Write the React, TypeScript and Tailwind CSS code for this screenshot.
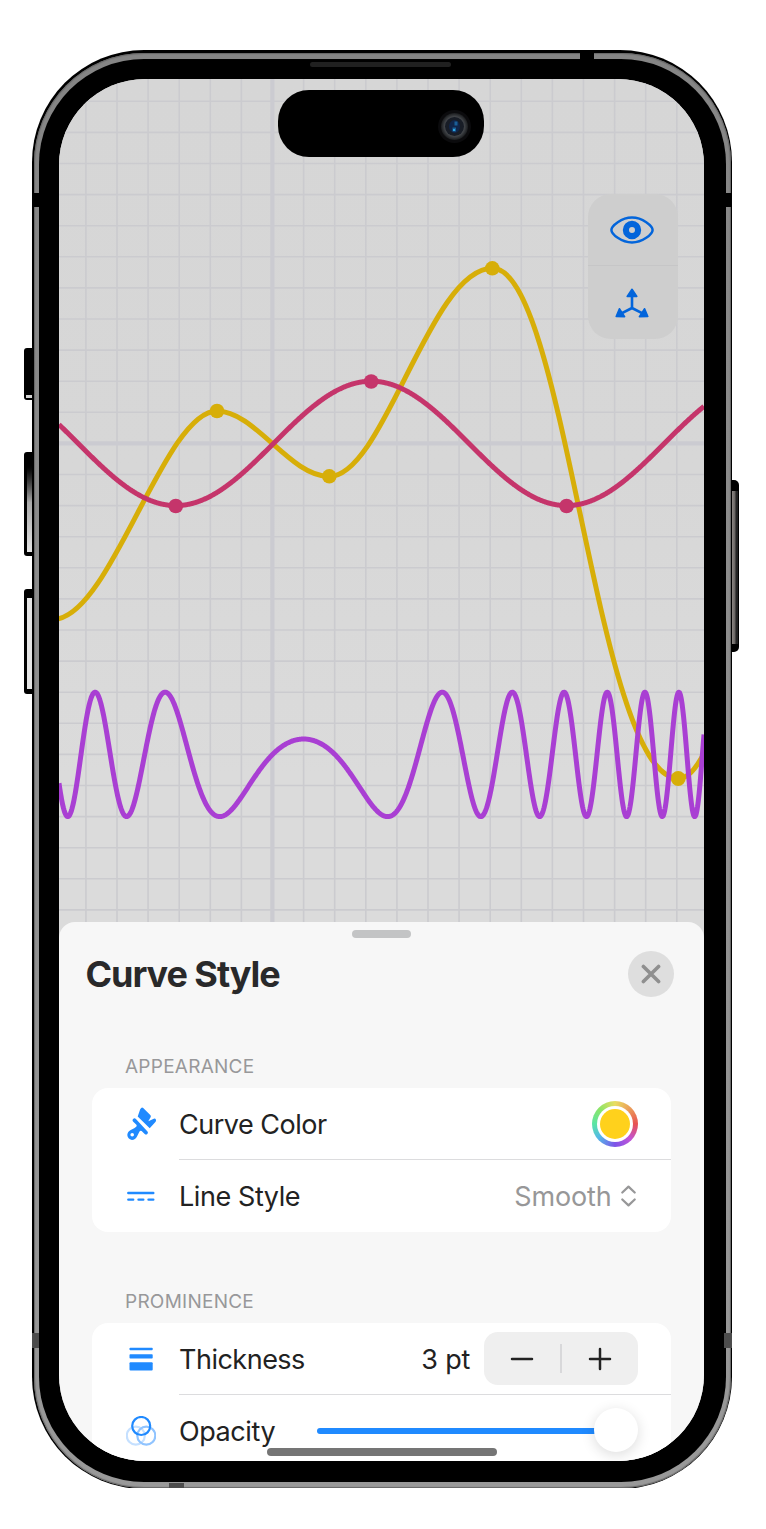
import React from "react";

const UNIT = 31.1;
const OX = 272.6;
const OY = 443.4;

function plot(f: (x: number) => number): string {
  let d = "";
  for (let px = 59; px <= 704; px += 0.5) {
    const y = OY - UNIT * f((px - OX) / UNIT);
    d += `${d ? "L" : "M"}${px} ${y.toFixed(2)}`;
  }
  return d;
}

const yellow =
  "M57 619C112 611 165 411 217 411C255 411 290 476.5 329 476.5C384 476.5 430 268.3 492.5 268.3C566 268.3 596 778.5 678.5 778.5C690 778.5 699 764 706 749";
const crimson = plot((x) => 2 * Math.sin((x - 0.03) / 2));
const purple = plot((x) => -10 + 2 * Math.sin((1 - (x - 1) * (x - 1)) / 4));

const cols = Array.from({ length: 20 }, (_, i) => i - 6);
const rows = Array.from({ length: 28 }, (_, i) => i - 11);

function Graph() {
  return (
    <svg className="absolute left-0 top-0" width="645" height="870" viewBox="59 79 645 870">
      <defs>
        <linearGradient id="paper" x1="0" y1="0" x2="0" y2="1">
          <stop offset="0" stopColor="#d6d6d6" />
          <stop offset="0.45" stopColor="#d7d7d7" />
          <stop offset="0.8" stopColor="#dbdbdb" />
          <stop offset="1" stopColor="#dbdbdb" />
        </linearGradient>
      </defs>
      <rect x="59" y="79" width="645" height="870" fill="url(#paper)" />
      <g stroke="#cbcbcf" strokeWidth="1.6">
        {cols.map((c) => (
          <path key={c} d={`M${OX + c * UNIT - 0.1} 79V949`} />
        ))}
        {rows.map((r) => (
          <path key={r} d={`M59 ${OY + r * UNIT}H704`} />
        ))}
      </g>
      <g stroke="#cbcbd1" strokeWidth="4.2">
        <path d={`M${OX - 0.2} 79V949`} />
        <path d={`M59 ${OY}H704`} />
      </g>
      <g fill="none" strokeWidth="5" strokeLinejoin="round">
        <path d={yellow} stroke="#d7ae08" />
        <path d={crimson} stroke="#c5356b" />
      </g>
      <g fill="#d7ae08">
        <circle cx="217" cy="411" r="7.3" />
        <circle cx="329.3" cy="476.3" r="7.3" />
        <circle cx="492.3" cy="268.3" r="7.3" />
        <circle cx="678.2" cy="778.5" r="7.5" />
      </g>
      <g fill="#c5356b">
        <circle cx="175.8" cy="506" r="7.3" />
        <circle cx="371.2" cy="381.5" r="7.3" />
        <circle cx="566.6" cy="506" r="7.3" />
      </g>
      <path d={purple} fill="none" stroke="#a93fd3" strokeWidth="5" strokeLinejoin="round" />
    </svg>
  );
}

function EyeIcon() {
  return (
    <svg width="44" height="28" viewBox="0 0 44 28" fill="none">
      <path
        d="M1.400 14C1.400 9.800 11.500 1.500 22 1.500S42.600 9.800 42.600 14 32.500 26.500 22 26.500 1.400 18.200 1.400 14Z"
        stroke="#0365db"
        strokeWidth="2.5"
      />
      <circle cx="22" cy="14" r="6.1" stroke="#0365db" strokeWidth="6.200" />
    </svg>
  );
}

function AxesIcon() {
  return (
    <svg width="34" height="30" viewBox="0 0 34 30" fill="#0365db" stroke="#0365db" strokeLinejoin="round">
      <path d="M17 5V20L5 26.200M17 20L29 26.200" fill="none" strokeWidth="2.600" />
      <path d="M17 1.300L21.800 8.400H12.200ZM1.200 28.500L4.400 20.800L9.600 28.600ZM32.800 28.500L29.600 20.800L24.400 28.600Z" strokeWidth="1.600" />
    </svg>
  );
}

function BrushIcon() {
  return (
    <svg className="ml-[2px]" width="30" height="34" viewBox="0 0 30 34" fill="#208aff">
      <path d="M14.600 0.700Q15.400 0.300 16.200 1.100L23.500 8.200Q24.200 9 23.600 10.200L21.300 14.200L26.800 11.700Q28.300 11.300 29 12.700Q29.300 13.900 28.400 14.900L22.700 21.200L10.700 9.500L13.200 2.300Q13.700 1.200 14.600 0.700Z" />
      <path d="M8.200 11.400Q6.800 11.200 5.900 12.200Q5 13.300 6 14.400L9.400 17.800Q10.200 18.700 9.200 19.700Q8 20.900 3.700 23Q0.500 24.700 0.300 28.100Q0.600 32.200 4.900 32.900Q8.300 32.800 10 29.400L12.500 24.500Q13.400 23.100 14.600 24L17.700 27.100Q19 28.100 20.300 27.100Q21.600 25.800 20.500 24.500L8.900 11.900Z" />
      <circle cx="5.200" cy="27.800" r="1.800" fill="#fff" />
    </svg>
  );
}

function LineStyleIcon() {
  return (
    <svg className="mt-[2px]" width="28" height="12" viewBox="0 0 28 12" stroke="#208aff" strokeLinecap="round" strokeWidth="2.400">
      <path d="M1.300 2H26.300M1.300 8.600H6.200M11.500 8.600H16.300M21.500 8.600H26.300" />
    </svg>
  );
}

function ThicknessIcon() {
  return (
    <svg width="24" height="24" viewBox="0 0 24 24" fill="#208aff">
      <rect x="0.500" y="0.800" width="23.200" height="2.400" rx="0.800" />
      <rect x="0.500" y="7.200" width="23.200" height="4.400" rx="0.800" />
      <rect x="0.500" y="15.300" width="23.200" height="8.200" rx="1" />
    </svg>
  );
}

function OpacityIcon() {
  return (
    <svg width="30" height="30" viewBox="0 0 30 30" fill="none" strokeWidth="2.200">
      <circle cx="9.800" cy="19.700" r="9" stroke="#c5e0ff" />
      <circle cx="20.300" cy="19.700" r="9" stroke="#90c4ff" />
      <circle cx="15.200" cy="10" r="9" stroke="#208aff" />
    </svg>
  );
}

function Row({ icon, label, tracking, children }: { icon: React.ReactNode; label: string; tracking: string; children: React.ReactNode }) {
  return (
    <div className="flex h-[72px] w-[579px] items-center pl-[33px]">
      <div className="flex w-8 shrink-0 justify-center">{icon}</div>
      <div className={`ml-[22px] mt-[2px] w-[130px] shrink-0 whitespace-nowrap text-[27px] leading-[34px] text-[#222] ${tracking}`}>{label}</div>
      <div className="flex flex-1 items-center justify-end pr-[33px]">{children}</div>
    </div>
  );
}

function Sheet() {
  return (
    <section className="relative mt-[842.500px] h-[560px] rounded-t-[16px] bg-[#f7f7f7]">
      <div className="flex justify-center pt-2">
        <div className="h-2 w-[59px] rounded-full bg-[#c3c4c5]" />
      </div>
      <header className="mt-[13px] flex h-[46px] items-center justify-between pl-[26.500px] pr-[30px]">
        <h1 className="whitespace-nowrap text-[36px] font-bold leading-[46px] tracking-[-1.050px] text-[#29292a]">Curve Style</h1>
        <button className="flex size-[46px] items-center justify-center rounded-full bg-[#dedede]">
          <svg width="20" height="20" viewBox="0 0 20 20" stroke="#8f8f8f" strokeWidth="3.600" strokeLinecap="round">
            <path d="M2.400 2.400L17.600 17.600M17.600 2.400L2.400 17.600" />
          </svg>
        </button>
      </header>
      <h2 className="ml-[66px] mt-[58px] h-6 text-[19px] leading-6 tracking-[0.250px] text-[#98989a]">APPEARANCE</h2>
      <div className="ml-[33px] mt-[9px] h-[144px] w-[579px] rounded-[16px] bg-white">
        <Row icon={<BrushIcon />} label="Curve Color" tracking="tracking-[-0.500px]">
          <div className="flex size-[46px] items-center justify-center rounded-full bg-[conic-gradient(#e9dd62,#eb9b58_45deg,#e85252_90deg,#c055d8_135deg,#7d54e8_180deg,#54b8e8_230deg,#5be5a5_270deg,#8de567_315deg,#e9dd62)]">
            <div className="flex size-[36px] items-center justify-center rounded-full bg-white">
              <div className="size-[30px] rounded-full bg-[#ffd11c]" />
            </div>
          </div>
        </Row>
        <div className="-mt-px ml-[87px] h-px bg-[#dcdcde]" />
        <Row icon={<LineStyleIcon />} label="Line Style" tracking="tracking-[-0.420px]">
          <span className="mt-[2px] text-[27px] leading-[34px] tracking-[-0.150px] text-[#979798]">Smooth</span>
          <svg className="ml-[9px] mr-[2.500px]" width="15" height="22" viewBox="0 0 15 22" fill="none" stroke="#979798" strokeWidth="2.200" strokeLinecap="round" strokeLinejoin="round">
            <path d="M1.300 7.500L7.500 1.600L13.700 7.500M1.300 14.500L7.500 20.400L13.700 14.500" />
          </svg>
        </Row>
      </div>
      <h2 className="ml-[66px] mt-[58px] h-6 text-[19px] leading-6 tracking-[0.250px] text-[#98989a]">PROMINENCE</h2>
      <div className="ml-[33px] mt-[9px] h-[216px] w-[579px] rounded-[16px] bg-white">
        <Row icon={<ThicknessIcon />} label="Thickness" tracking="tracking-[-0.500px]">
          <span className="mt-[2px] whitespace-nowrap text-[27px] leading-[34px] tracking-[-0.250px] text-[#222]">3 pt</span>
          <div className="ml-[14px] flex h-[53px] w-[154px] items-center rounded-[14px] bg-[#efefef]">
            <button className="flex flex-1 justify-center">
              <svg width="24" height="24" viewBox="0 0 24 24" stroke="#222" strokeWidth="2.500" strokeLinecap="round">
                <path d="M2 12H22" />
              </svg>
            </button>
            <div className="h-[29px] w-[1.500px] bg-[#d8d8da]" />
            <button className="flex flex-1 justify-center">
              <svg width="24" height="24" viewBox="0 0 24 24" stroke="#222" strokeWidth="2.500" strokeLinecap="round">
                <path d="M2 12H22M12 2V22" />
              </svg>
            </button>
          </div>
        </Row>
        <div className="-mt-px ml-[87px] h-px bg-[#dcdcde]" />
        <Row icon={<OpacityIcon />} label="Opacity" tracking="tracking-[-0.420px]">
          <div className="flex w-[321px] shrink-0 items-center pb-[2px]">
            <div className="mt-[3px] h-[6.500px] flex-1 rounded-l-full bg-[#208aff]" />
            <div className="-ml-1 size-[44px] rounded-full bg-white shadow-[0_3px_14px_rgba(0,0,0,0.14)]" />
          </div>
        </Row>
      </div>
    </section>
  );
}

function Island() {
  return (
    <div className="absolute left-[219px] top-[10.500px] flex h-[67px] w-[206px] items-center justify-end rounded-[31px] bg-black pr-[13px] pt-[7px]">
      <div className="flex size-[33px] items-center justify-center rounded-full bg-[#0b0b0d]">
        <div className="flex size-[27px] items-center justify-center rounded-full bg-radial from-[#45484c] from-50% to-[#1c1e20] to-70%">
          <div className="flex size-[19px] items-center justify-center rounded-full bg-[#181d26]">
            <svg width="13" height="15" viewBox="0 0 13 15">
              <ellipse cx="6.500" cy="7.500" rx="5.500" ry="6.500" fill="#10254a" />
              <path d="M6.500 2.500h3v4h-3zM4.500 8.500h3.500v4h-3.500z" fill="#1a5f98" />
              <path d="M5 10h2v2h-2z" fill="#2ba7df" />
            </svg>
          </div>
        </div>
      </div>
    </div>
  );
}

export default function App() {
  return (
    <main className="relative h-[1529px] w-[766px] overflow-hidden bg-white pl-[32px] pt-[50px] font-['Inter',sans-serif]">
      <div className="absolute left-[23.500px] top-[348px] flex h-[52px] w-[12px] flex-col justify-end rounded-l-[3px] bg-black pb-[2px] pl-[2px]">
        <div className="h-[3px] bg-[#d5d5d5]" />
      </div>
      <div className="absolute left-[23.500px] top-[452px] h-[104px] w-[12px] rounded-l-[3px] bg-black pb-[4px] pl-[3px] pt-[10px]">
        <div className="h-full bg-gradient-to-b from-black via-[#aaa] via-45% to-[#e5e5e5]" />
      </div>
      <div className="absolute left-[23.500px] top-[589px] h-[105px] w-[12px] rounded-l-[3px] bg-black pb-[5px] pl-[3px] pt-[9px]">
        <div className="h-full bg-[#e5e5e5]" />
      </div>
      <div className="absolute left-[728px] top-[479.500px] h-[172px] w-[11px] rounded-r-[5px] bg-black pb-[8px] pr-px pt-[11px]">
        <div className="h-full bg-gradient-to-r from-[#8b8683] from-40% via-[#686462] via-70% to-[#222] to-80%" />
      </div>

      <div className="relative h-[1437.500px] w-[700px] overflow-hidden">
        <div className="h-[1439px] w-[700px] rounded-[112px] bg-black px-[1.500px] pb-[1.500px] pt-[2.500px]">
          <div className="h-full rounded-[110px] bg-gradient-to-b from-[#858585] to-[#999] px-[5px] pb-[5.500px] pt-[6px] shadow-[inset_0_0_1px_1px_#666]">
            <div className="h-full rounded-[105px] bg-black px-[20.500px] pt-[20.500px]">
              <div className="relative h-[1382px] w-[645px] overflow-hidden rounded-[86px] bg-[#d7d7d7]">
                <Graph />
                <Island />
                <div className="absolute left-[529px] top-[115px] flex h-[145px] w-[90px] flex-col rounded-[23px] bg-[#cecece]">
                  <button className="flex h-[71px] items-center justify-center pr-[2px]">
                    <EyeIcon />
                  </button>
                  <div className="h-px bg-[#c6c6c7]" />
                  <button className="flex h-[73px] items-center justify-center pr-[2px] pt-px">
                    <AxesIcon />
                  </button>
                </div>
                <Sheet />
                <div className="absolute bottom-[5px] left-[208px] h-2 w-[230px] rounded-full bg-[#757575]" />
              </div>
            </div>
          </div>
        </div>
        <div className="absolute left-[278px] top-[12px] h-[5px] w-[141px] rounded-full bg-[#202020]" />
        <div className="absolute left-[548px] top-0 h-[9px] w-[14px] bg-black" />
        <div className="absolute left-0 top-[143px] h-[14px] w-[8px] bg-black" />
        <div className="absolute right-0 top-[143px] h-[14px] w-[8px] bg-black" />
        <div className="absolute left-0 top-[1283px] h-[15px] w-[7px] bg-[#4c4c4c]" />
        <div className="absolute right-0 top-[1283px] h-[15px] w-[8px] bg-[#4c4c4c]" />
        <div className="absolute bottom-0 left-[137px] h-[5px] w-[15px] bg-[#4c4c4c]" />
      </div>
    </main>
  );
}
